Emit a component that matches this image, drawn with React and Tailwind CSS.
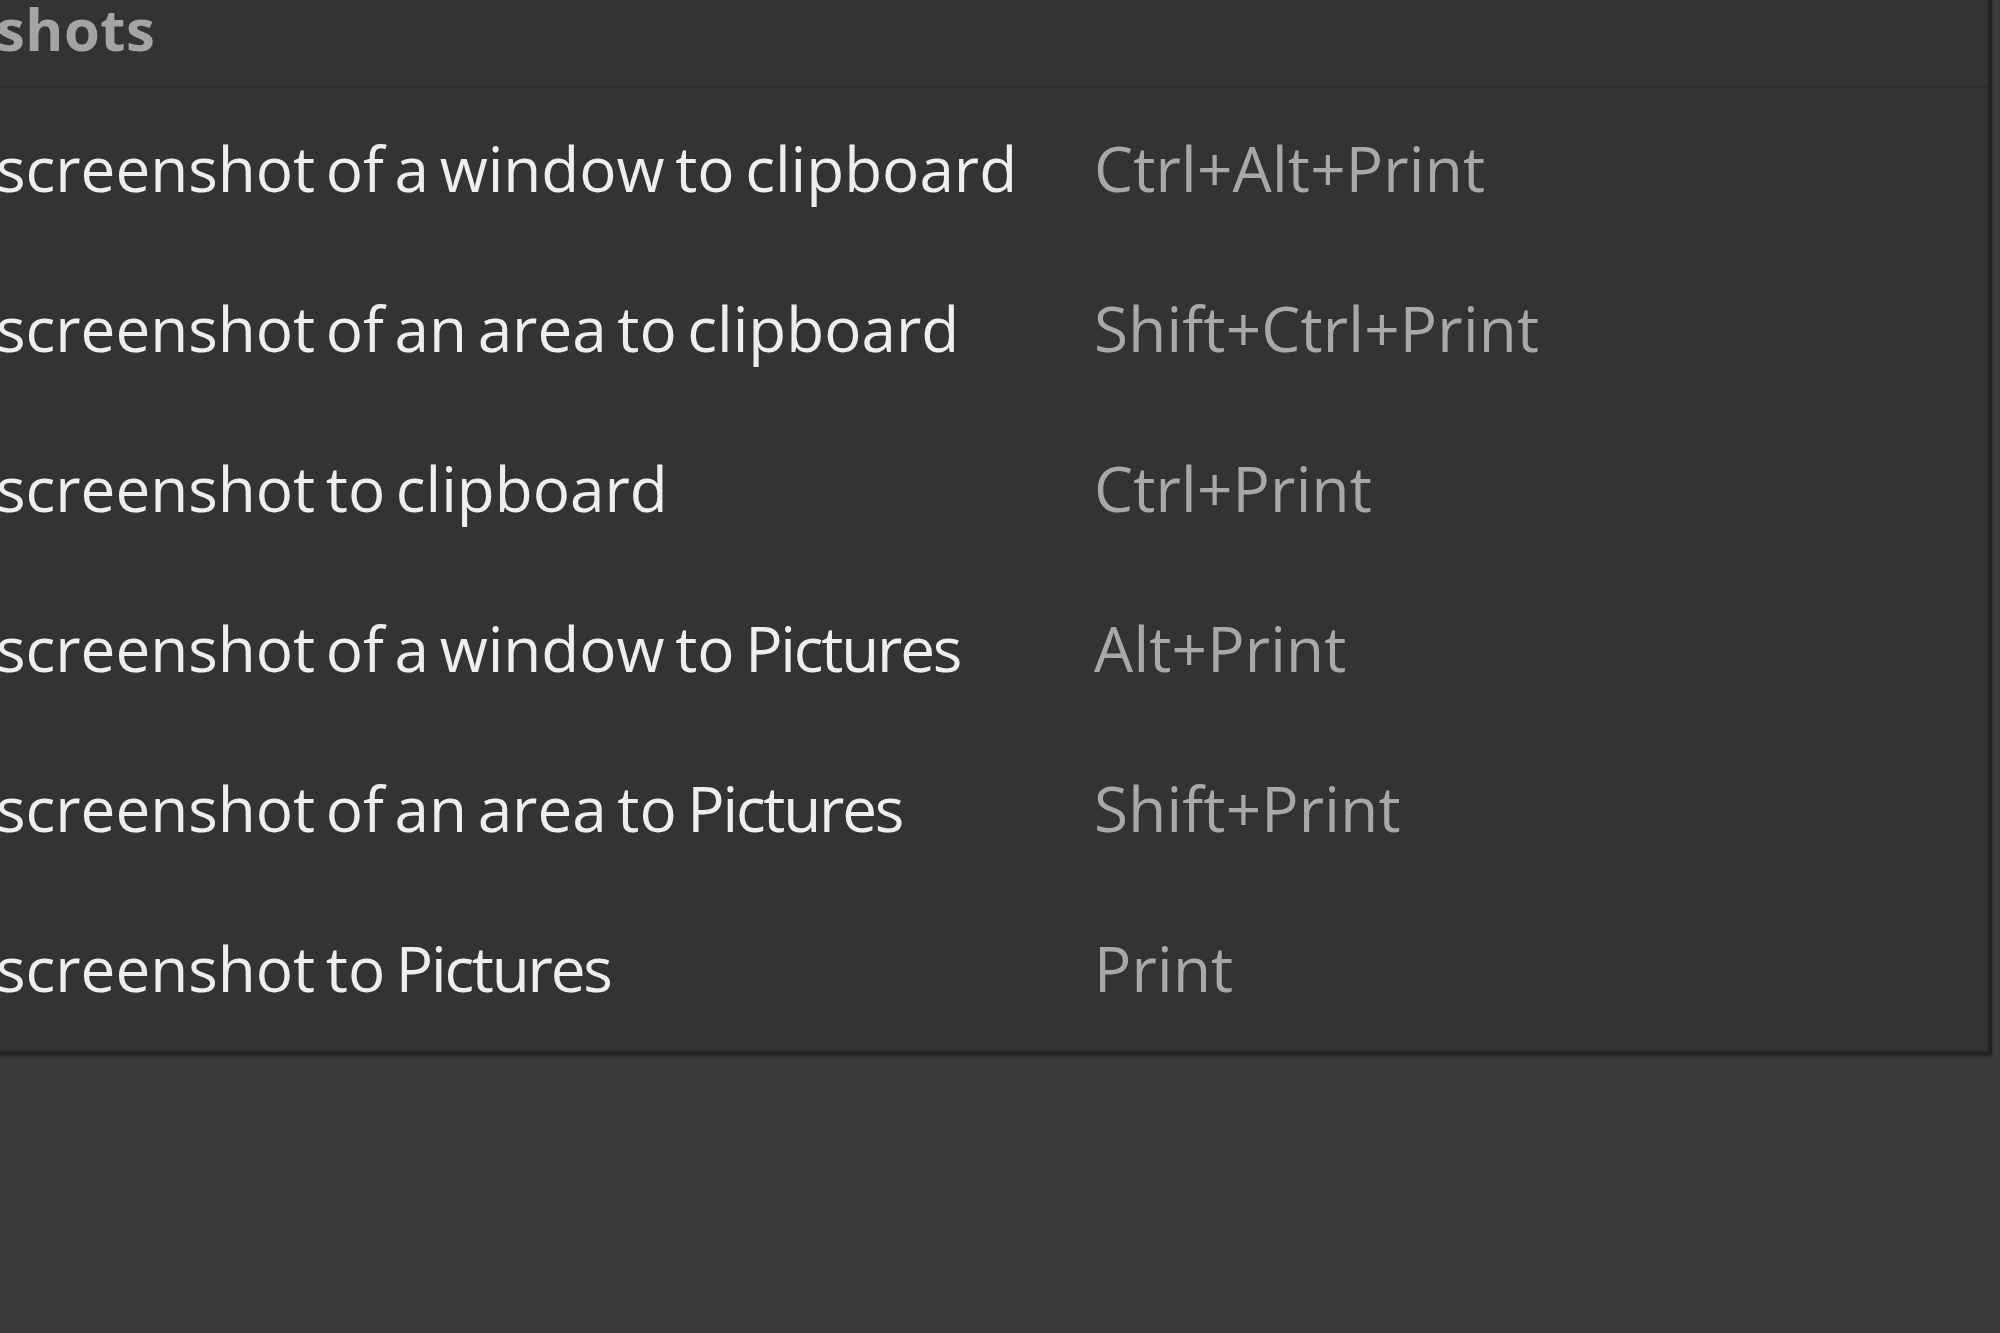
const rows = [
  ['screenshot of a window to', 'clipboard', 'Ctrl+Alt+Print'],
  ['screenshot of an area to', 'clipboard', 'Shift+Ctrl+Print'],
  ['screenshot to', 'clipboard', 'Ctrl+Print'],
  ['screenshot of a window to', 'Pictures', 'Alt+Print'],
  ['screenshot of an area to', 'Pictures', 'Shift+Print'],
  ['screenshot to', 'Pictures', 'Print'],
]

export default function App() {
  return (
    <div className="w-[2000px] h-[1333px] overflow-hidden bg-[#3c3c3c] font-['Open_Sans',sans-serif]">
      <div className="w-[1992px] pb-[3px] border-r-4 border-b-4 border-[#232323] bg-[#333333] shadow-[0_2px_3px_rgba(0,0,0,0.35)]">
        <div className="h-[88px] border-b-2 border-[#2c2c2c] flex items-end pb-[40px] -ml-[4px]">
          <span className="text-[58px] leading-none font-bold text-[#a4a4a4] -mb-[12px] tracking-[0.5px]">shots</span>
        </div>
        {rows.map(([label, dest, keys]) => (
          <div key={label + dest} className="h-[160px] flex items-center">
            <span className="w-[1098px] -ml-[4px] text-[62px] text-[#eeeeee] whitespace-nowrap [word-spacing:-5.5px]">
              {label}{' '}
              <span className={dest === 'Pictures' ? 'tracking-[-2.2px]' : ''}>{dest}</span>
            </span>
            <span className="text-[62px] text-[#a8a8a8] whitespace-nowrap tracking-[0.2px]">{keys}</span>
          </div>
        ))}
      </div>
    </div>
  )
}
